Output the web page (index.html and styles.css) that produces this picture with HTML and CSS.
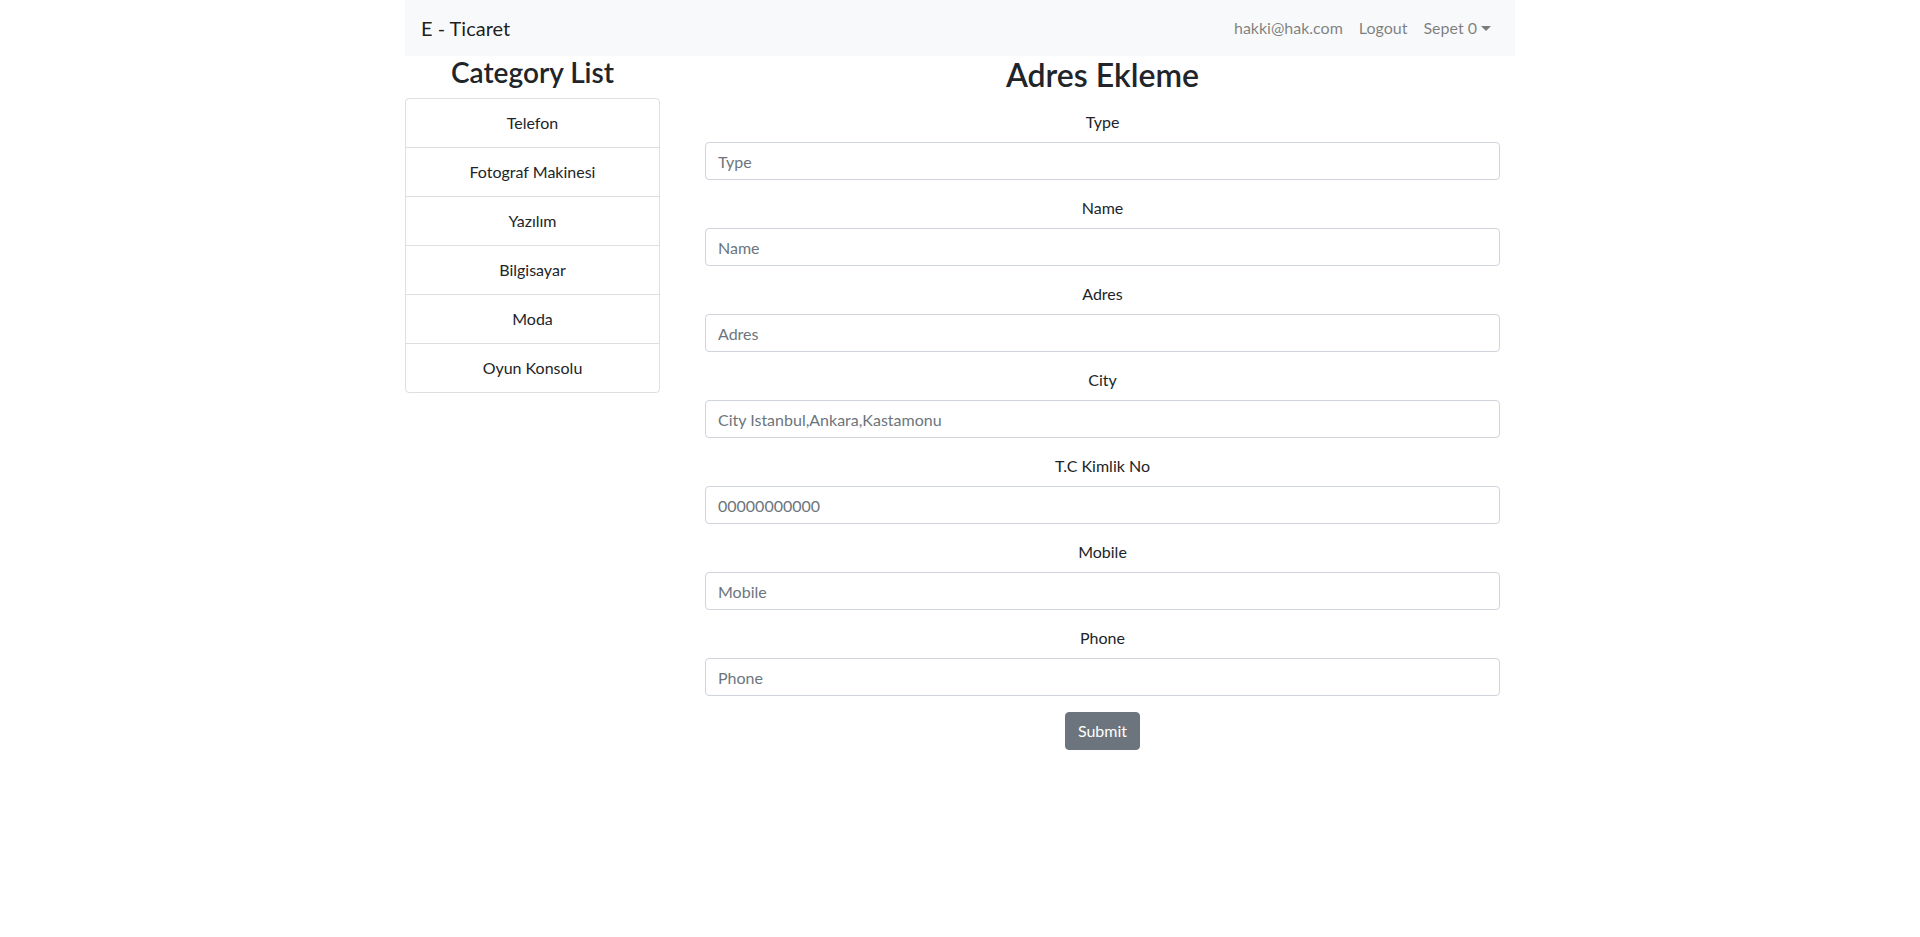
FILE: index.html
```html
<!DOCTYPE html>
<html lang="tr">
<head>
<meta charset="utf-8">
<title>E - Ticaret</title>
<link rel="stylesheet" href="styles.css">
</head>
<body>
<div class="container">
  <nav class="navbar">
    <a class="brand" href="#">E - Ticaret</a>
    <ul class="nav">
      <li><a class="nav-link" href="#">hakki@hak.com</a></li>
      <li><a class="nav-link" href="#">Logout</a></li>
      <li><a class="nav-link dropdown" href="#">Sepet 0<span class="caret"></span></a></li>
    </ul>
  </nav>
  <div class="row">
    <aside class="col-side">
      <h3 class="side-title">Category List</h3>
      <ul class="list-group">
        <li class="list-item">Telefon</li>
        <li class="list-item">Fotograf Makinesi</li>
        <li class="list-item">Yazılım</li>
        <li class="list-item">Bilgisayar</li>
        <li class="list-item">Moda</li>
        <li class="list-item">Oyun Konsolu</li>
      </ul>
    </aside>
    <main class="col-main">
      <h2 class="page-title">Adres Ekleme</h2>
      <form class="form">
        <div class="form-group">
          <label class="label">Type</label>
          <input class="input" type="text" placeholder="Type">
        </div>
        <div class="form-group">
          <label class="label">Name</label>
          <input class="input" type="text" placeholder="Name">
        </div>
        <div class="form-group">
          <label class="label">Adres</label>
          <input class="input" type="text" placeholder="Adres">
        </div>
        <div class="form-group">
          <label class="label">City</label>
          <input class="input" type="text" placeholder="City Istanbul,Ankara,Kastamonu">
        </div>
        <div class="form-group">
          <label class="label">T.C Kimlik No</label>
          <input class="input" type="text" placeholder="00000000000">
        </div>
        <div class="form-group">
          <label class="label">Mobile</label>
          <input class="input" type="text" placeholder="Mobile">
        </div>
        <div class="form-group">
          <label class="label">Phone</label>
          <input class="input" type="text" placeholder="Phone">
        </div>
        <button class="btn" type="button">Submit</button>
      </form>
    </main>
  </div>
</div>
</body>
</html>
```

FILE: styles.css
```css
* { box-sizing: border-box; }
html, body { margin: 0; padding: 0; }
body {
  font-family: Lato, "Noto Sans", sans-serif;
  font-size: 16px;
  line-height: 1.5;
  color: #212529;
  background: #fff;
}
.container {
  width: 1140px;
  margin: 0 auto;
  padding: 0 15px;
}
.navbar {
  display: flex;
  align-items: center;
  justify-content: space-between;
  height: 56px;
  padding: 0 16px;
  background: #f8f9fa;
}
.brand {
  font-size: 20px;
  line-height: 30px;
  color: rgba(0,0,0,.9);
  text-decoration: none;
}
.nav {
  display: flex;
  list-style: none;
  margin: 0;
  padding: 0;
}
.nav-link {
  display: block;
  padding: 8px;
  color: rgba(0,0,0,.5);
  text-decoration: none;
}
.caret {
  display: inline-block;
  margin-left: 4px;
  vertical-align: 3px;
  border-top: 5px solid;
  border-left: 5px solid transparent;
  border-right: 5px solid transparent;
}
.row {
  display: flex;
  margin: 0 -15px;
}
.col-side {
  width: 285px;
  padding: 0 15px;
  flex: none;
}
.col-main {
  flex: 1;
  padding: 0 30px;
  text-align: center;
}
.side-title {
  margin: 0 0 8px;
  font-size: 28px;
  line-height: 33.6px;
  font-weight: 600;
  text-align: center;
}
.list-group {
  list-style: none;
  margin: 0;
  padding: 0;
  border: 1px solid rgba(0,0,0,.125);
  border-radius: 4px;
}
.list-item {
  padding: 12px 20px;
  line-height: 24px;
  text-align: center;
  border-top: 1px solid rgba(0,0,0,.125);
}
.list-item:first-child { border-top: 0; }
.page-title {
  margin: 0 0 16px;
  font-size: 32px;
  line-height: 38px;
  font-weight: 600;
}
.form-group {
  margin-bottom: 16px;
}
.label {
  display: inline-block;
  margin-bottom: 8px;
}
.input {
  display: block;
  width: 100%;
  height: 38px;
  padding: 6px 12px;
  font: inherit;
  font-size: 16px;
  color: #495057;
  background: #fff;
  border: 1px solid #ced4da;
  border-radius: 4px;
}
.input::placeholder { color: #6c757d; opacity: 1; }
.btn {
  display: inline-block;
  height: 38px;
  padding: 6px 12px;
  font: inherit;
  color: #fff;
  background: #6c757d;
  border: 1px solid #6c757d;
  border-radius: 4px;
}
```
